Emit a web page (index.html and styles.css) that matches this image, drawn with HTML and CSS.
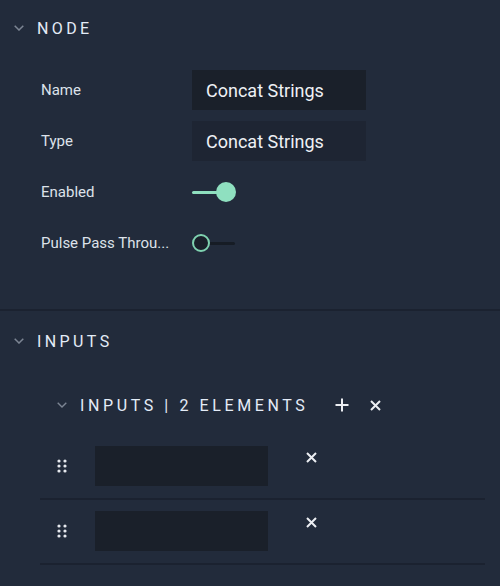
FILE: index.html
```html
<!DOCTYPE html>
<html>
<head>
<meta charset="utf-8">
<link rel="stylesheet" href="styles.css">
</head>
<body>
<div class="panel">
  <section class="section node">
    <div class="section-header">
      <svg class="chev" width="10" height="6" viewBox="0 0 10 6"><path d="M0.7 0.7 L5 5 L9.3 0.7" fill="none" stroke="#7c8593" stroke-width="1.5"/></svg>
      <span class="title">NODE</span>
    </div>
    <div class="props">
      <div class="prop">
        <span class="label">Name</span>
        <div class="field">Concat Strings</div>
      </div>
      <div class="prop">
        <span class="label">Type</span>
        <div class="field field-ro">Concat Strings</div>
      </div>
      <div class="prop">
        <span class="label">Enabled</span>
        <div class="toggle on"><span class="track"></span><span class="thumb"></span></div>
      </div>
      <div class="prop">
        <span class="label">Pulse Pass Throu...</span>
        <div class="toggle off"><span class="track"></span><span class="thumb"></span></div>
      </div>
    </div>
  </section>
  <section class="section inputs">
    <div class="section-header">
      <svg class="chev" width="10" height="6" viewBox="0 0 10 6"><path d="M0.7 0.7 L5 5 L9.3 0.7" fill="none" stroke="#7c8593" stroke-width="1.5"/></svg>
      <span class="title">INPUTS</span>
    </div>
    <div class="sub-header">
      <svg class="chev small" width="10" height="6" viewBox="0 0 10 6"><path d="M0.7 0.7 L5 5 L9.3 0.7" fill="none" stroke="#7c8593" stroke-width="1.4"/></svg>
      <span class="sub-title">INPUTS | 2 ELEMENTS</span>
      <svg class="plus" width="14" height="14" viewBox="0 0 14 14"><path d="M7 0.5 V13.5 M0.5 7 H13.5" stroke="#eceef2" stroke-width="2"/></svg>
      <svg class="x" width="11" height="11" viewBox="0 0 11 11"><path d="M1 1 L10 10 M10 1 L1 10" stroke="#eceef2" stroke-width="2"/></svg>
    </div>
    <div class="list">
      <div class="item">
        <svg class="handle" width="10" height="14" viewBox="0 0 10 14"><g fill="#e6e9ee"><circle cx="2" cy="2" r="1.6"/><circle cx="8" cy="2" r="1.6"/><circle cx="2" cy="7" r="1.6"/><circle cx="8" cy="7" r="1.6"/><circle cx="2" cy="12" r="1.6"/><circle cx="8" cy="12" r="1.6"/></g></svg>
        <div class="item-field"></div>
        <svg class="x item-x" width="11" height="11" viewBox="0 0 11 11"><path d="M1 1 L10 10 M10 1 L1 10" stroke="#eceef2" stroke-width="2"/></svg>
      </div>
      <div class="item">
        <svg class="handle" width="10" height="14" viewBox="0 0 10 14"><g fill="#e6e9ee"><circle cx="2" cy="2" r="1.6"/><circle cx="8" cy="2" r="1.6"/><circle cx="2" cy="7" r="1.6"/><circle cx="8" cy="7" r="1.6"/><circle cx="2" cy="12" r="1.6"/><circle cx="8" cy="12" r="1.6"/></g></svg>
        <div class="item-field"></div>
        <svg class="x item-x" width="11" height="11" viewBox="0 0 11 11"><path d="M1 1 L10 10 M10 1 L1 10" stroke="#eceef2" stroke-width="2"/></svg>
      </div>
    </div>
  </section>
</div>
</body>
</html>
```

FILE: styles.css
```css
html, body {
  margin: 0;
  padding: 0;
  background: #222b3b;
  font-family: Roboto, "Liberation Sans", sans-serif;
  color: #dde2ea;
}
.panel {
  width: 500px;
  height: 586px;
  overflow: hidden;
}
.section-header {
  display: flex;
  align-items: center;
  height: 56px;
  padding-left: 14px;
}
.chev {
  display: block;
  margin-right: 13px;
}
.title {
  font-size: 16px;
  letter-spacing: 3.4px;
  color: #e4ecf7;
  font-weight: 400;
}
.node {
  padding-bottom: 46px;
  border-bottom: 2px solid #1b2230;
}
.props {
  display: flex;
  flex-direction: column;
  gap: 11px;
  margin-top: 14px;
  padding-left: 41px;
}
.prop {
  display: flex;
  align-items: center;
  height: 40px;
}
.label {
  width: 151px;
  font-size: 15px;
  color: #dde2ea;
  white-space: nowrap;
}
.field {
  width: 160px;
  height: 40px;
  padding-left: 14px;
  display: flex;
  align-items: center;
  background: #1a202a;
  font-size: 18px;
  color: #eef1f5;
}
.field-ro {
  background: #1e2533;
}
.toggle {
  position: relative;
  width: 44px;
  height: 22px;
}
.toggle .track {
  position: absolute;
  left: 0;
  top: 10px;
  height: 3px;
  border-radius: 2px;
}
.toggle.on .track {
  width: 34px;
  background: #8fdfbf;
}
.toggle.on .thumb {
  position: absolute;
  left: 24px;
  top: 1px;
  width: 20px;
  height: 20px;
  border-radius: 50%;
  background: #8fe0c0;
}
.toggle.off .track {
  left: 8px;
  width: 35px;
  background: #161c25;
}
.toggle.off .thumb {
  position: absolute;
  left: 0;
  top: 1.5px;
  width: 14px;
  height: 14px;
  border-radius: 50%;
  border: 2.5px solid #7fd2b0;
  background: #1a202a;
}
.inputs .section-header {
  height: 60px;
}
.sub-header {
  display: flex;
  align-items: center;
  height: 40px;
  margin-top: 14px;
  padding-left: 57px;
}
.chev.small {
  margin-right: 13px;
}
.sub-title {
  font-size: 16px;
  letter-spacing: 3.6px;
  color: #e4ecf7;
  white-space: nowrap;
}
.plus {
  display: block;
  margin-left: 27px;
}
.sub-header .x {
  display: block;
  margin-left: 21px;
}
.list {
  margin-top: 10px;
  margin-left: 40px;
  width: 445px;
}
.item {
  display: flex;
  align-items: center;
  padding: 11px 0 12px 17px;
  border-bottom: 2px solid #1b2230;
}
.handle {
  display: block;
  margin-right: 28px;
}
.item-field {
  width: 173px;
  height: 40px;
  background: #1a202a;
}
.item-x {
  display: block;
  align-self: flex-start;
  margin-top: 6px;
  margin-left: 38px;
}
```
